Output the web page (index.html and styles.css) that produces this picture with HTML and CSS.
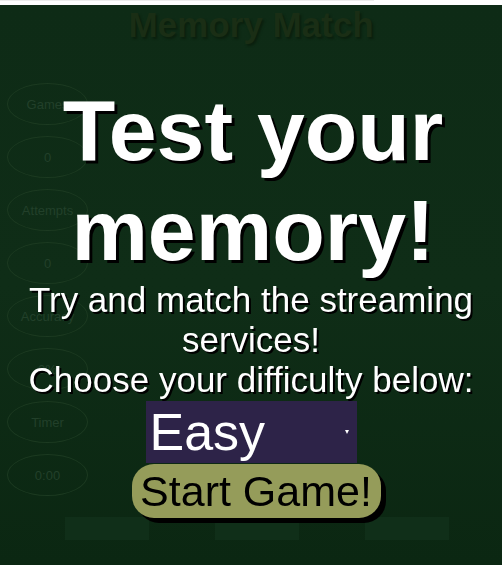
FILE: index.html
```html
<!DOCTYPE html>
<html lang="en">
<head>
<meta charset="utf-8">
<title>Memory Match</title>
<link rel="stylesheet" href="styles.css">
</head>
<body>
<div class="topstrip"><div class="topline"></div></div>
<main class="game">
  <h1 class="title">Memory Match</h1>
  <div class="board">
    <aside class="stats">
      <div class="stat">Games</div>
      <div class="stat">0</div>
      <div class="stat">Attempts</div>
      <div class="stat">0</div>
      <div class="stat">Accuracy</div>
      <div class="stat">0%</div>
      <div class="stat">Timer</div>
      <div class="stat">0:00</div>
    </aside>
    <section class="cards">
      <div class="card"></div>
      <div class="card"></div>
      <div class="card"></div>
    </section>
  </div>
</main>
<div class="modal">
  <h2 class="modal-title">Test your memory!</h2>
  <p class="modal-text">Try and match the streaming services!<br>Choose your difficulty below:</p>
  <div class="select-wrap">
    <select class="difficulty">
      <option>Easy</option>
      <option>Medium</option>
      <option>Hard</option>
    </select>
  </div>
  <button class="start">Start Game!</button>
</div>
</body>
</html>
```

FILE: styles.css
```css
html, body {
  margin: 0;
  padding: 0;
  height: 100%;
  overflow: hidden;
}
body {
  background: #0d2914;
  font-family: "Liberation Sans", Arial, sans-serif;
}
.topstrip {
  height: 5px;
  background: #ffffff;
}
.topline {
  width: 374px;
  height: 1px;
  background: #ececec;
}
.game {
  height: 560px;
  background: linear-gradient(#0e2b16, #0f2d17 50%, #0b2712);
}
.title {
  margin: 0;
  text-align: center;
  font-size: 35px;
  line-height: 40px;
  font-weight: bold;
  color: #1a2e15;
  text-shadow: 2px 2px 2px #0b200e;
}
.board {
  display: flex;
}
.stats {
  display: flex;
  flex-direction: column;
  gap: 11px;
  padding: 38px 0 0 7px;
}
.stat {
  width: 79px;
  height: 40px;
  border: 1px solid #1c3a21;
  border-radius: 50%;
  display: flex;
  align-items: center;
  justify-content: center;
  font-size: 13px;
  color: #22402a;
}
.cards {
  display: flex;
  align-self: flex-start;
  gap: 66px;
  margin: 472px 0 0 -23px;
}
.card {
  width: 84px;
  height: 23px;
  background: #102f19;
}
.modal {
  position: fixed;
  left: 0;
  right: 0;
  top: 80px;
  display: flex;
  flex-direction: column;
  align-items: center;
  color: #ffffff;
}
.modal-title {
  margin: 0 0 0 4px;
  font-size: 86px;
  line-height: 100px;
  font-weight: bold;
  text-align: center;
  width: 440px;
  text-shadow: 3px 3px 0 #000;
}
.modal-text {
  margin: 0;
  font-size: 35px;
  line-height: 40px;
  text-align: center;
  text-shadow: 2px 2px 0 #000;
}
.select-wrap {
  position: relative;
  margin-top: 1px;
}
.select-wrap::after {
  content: "";
  position: absolute;
  right: 8px;
  top: 29px;
  border-left: 2.5px solid transparent;
  border-right: 2.5px solid transparent;
  border-top: 4px solid #ffffff;
}
.difficulty {
  appearance: none;
  -webkit-appearance: none;
  display: block;
  width: 211px;
  height: 62px;
  border: none;
  border-radius: 0;
  padding: 0 0 0 4px;
  margin: 0;
  background: #2d2348;
  color: #ffffff;
  font-family: "Liberation Sans", Arial, sans-serif;
  font-size: 52px;
  line-height: 62px;
}
.start {
  margin: 1px 0 0 10px;
  width: 249px;
  height: 54px;
  padding: 0;
  border: none;
  border-radius: 22px;
  background: #959c5a;
  color: #000000;
  font-family: "Liberation Sans", Arial, sans-serif;
  font-size: 43px;
  box-shadow: 5px 5px 0 #000;
}
```
